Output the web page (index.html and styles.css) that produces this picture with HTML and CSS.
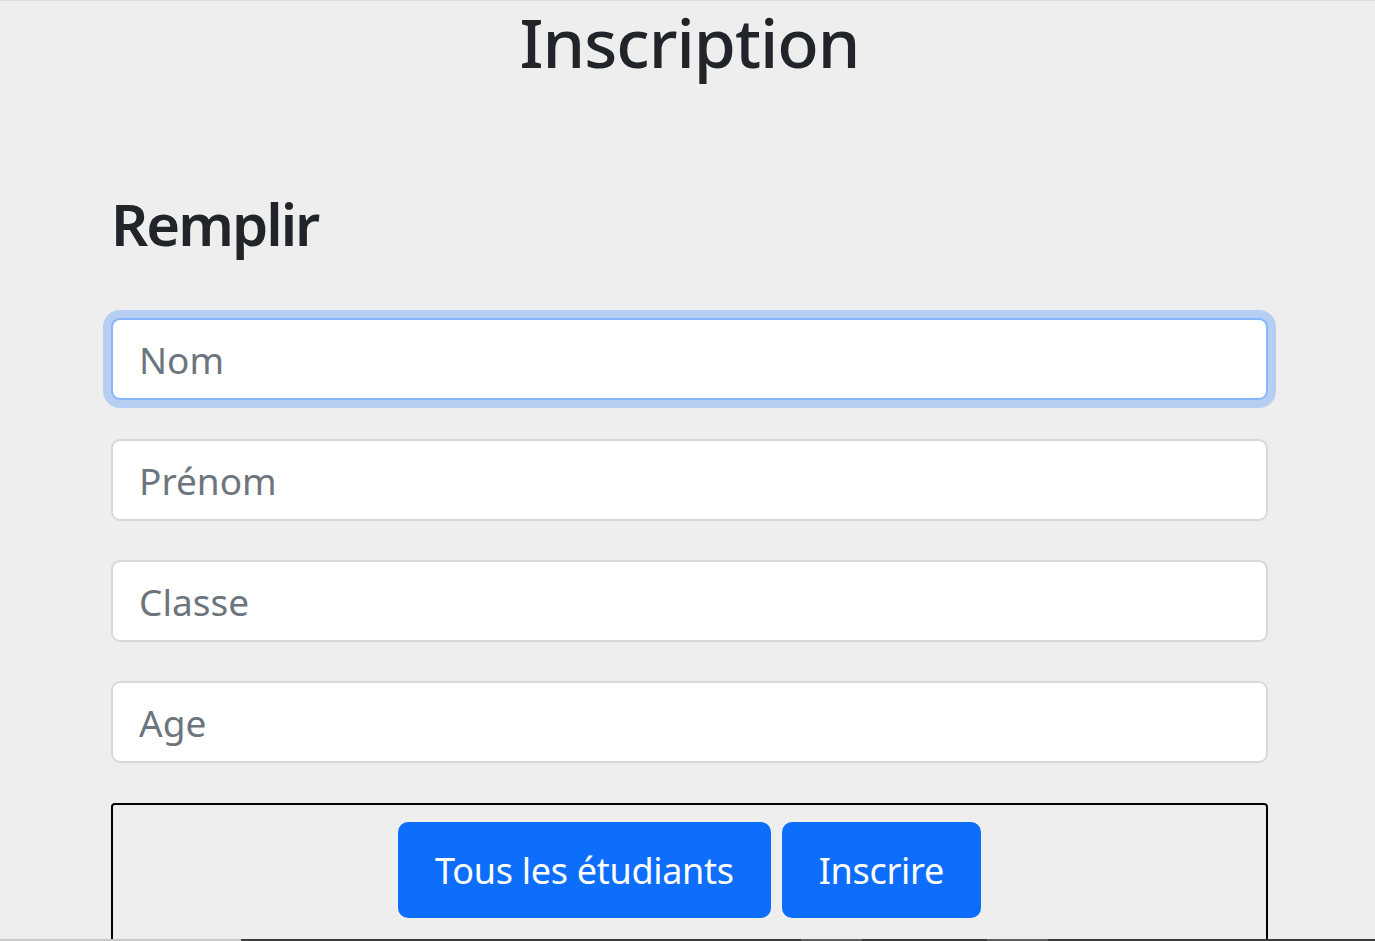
FILE: index.html
```html
<!DOCTYPE html>
<html lang="fr">
<head>
<meta charset="utf-8">
<title>Inscription</title>
<link rel="stylesheet" href="styles.css">
</head>
<body>
<div class="page">
  <h1 class="title">Inscription</h1>
  <div class="container">
    <h2 class="subtitle">Remplir</h2>
    <form class="form">
      <input class="field is-focused" type="text" placeholder="Nom">
      <input class="field" type="text" placeholder="Prénom">
      <input class="field" type="text" placeholder="Classe">
      <input class="field" type="text" placeholder="Age">
      <div class="actions">
        <button type="button" class="btn">Tous les étudiants</button>
        <button type="button" class="btn">Inscrire</button>
      </div>
    </form>
  </div>
</div>
<div class="taskbar">
  <span class="tb-light"></span>
  <span class="tb-dark tb-a"></span>
  <span class="tb-mid tb-b"></span>
  <span class="tb-dark tb-c"></span>
  <span class="tb-mid tb-d"></span>
  <span class="tb-dark tb-e"></span>
</div>
</body>
</html>
```

FILE: styles.css
```css
html, body {
  margin: 0;
  padding: 0;
  height: 100%;
  overflow: hidden;
}
body {
  background: #eeeeee;
  font-family: "Noto Sans", "Open Sans", sans-serif;
  color: #212529;
  border-top: 1px solid #dcdcdc;
  box-sizing: border-box;
}
.page {
  width: 1157px;
  margin-left: 111px;
}
.title {
  margin: 0;
  font-size: 68px;
  font-weight: 500;
  line-height: 81px;
  letter-spacing: -1px;
  text-align: center;
}
.container {
  padding-top: 106px;
}
.subtitle {
  margin: 0;
  font-size: 58px;
  font-weight: 600;
  line-height: 72px;
  letter-spacing: -2px;
}
.form {
  display: flex;
  flex-direction: column;
  gap: 39px;
  margin-top: 58px;
}
.field {
  box-sizing: border-box;
  height: 82px;
  width: 100%;
  border: 2px solid #d6d9dc;
  border-radius: 9px;
  background: #fff;
  padding: 0 26px;
  font-family: inherit;
  font-size: 37px;
  color: #212529;
  outline: none;
}
.field::placeholder {
  color: #6c757d;
}
.field.is-focused {
  border-color: #86b7fe;
  box-shadow: 0 0 0 8px rgba(13, 110, 253, 0.25);
}
.actions {
  box-sizing: border-box;
  margin-top: 1px;
  border: 2px solid #000;
  border-radius: 4px;
  height: 160px;
  padding-top: 17px;
  display: flex;
  justify-content: center;
  align-items: flex-start;
  gap: 11px;
}
.btn {
  height: 96px;
  background: #0d6efd;
  border: none;
  border-radius: 10px;
  color: #fff;
  font-family: inherit;
  font-size: 36px;
  letter-spacing: -0.3px;
  padding: 0 37px;
  cursor: pointer;
}
.taskbar {
  position: fixed;
  left: 0;
  right: 0;
  bottom: 0;
  height: 2px;
  display: flex;
}
.taskbar span { display: block; height: 100%; }
.tb-light { width: 241px; background: #c8c8c8; }
.tb-dark { background: #3c3c3c; }
.tb-mid { background: #5f5f5f; }
.tb-a { width: 560px; }
.tb-b { width: 61px; }
.tb-c { width: 125px; }
.tb-d { width: 61px; }
.tb-e { flex: 1; }
```
